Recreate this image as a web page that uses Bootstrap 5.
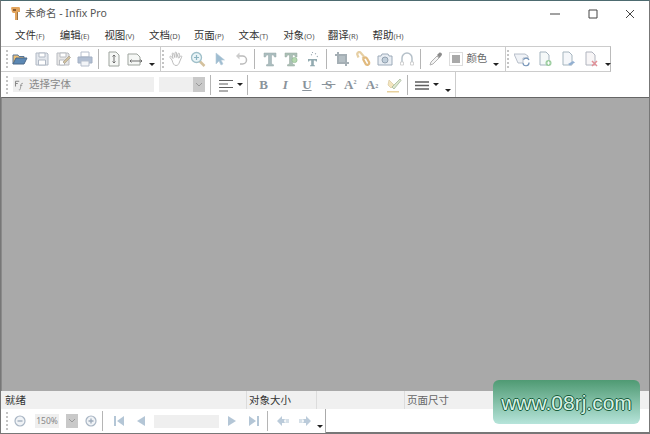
<!DOCTYPE html>
<html lang="zh-CN">
  <head>
    <meta charset="UTF-8" />
    <meta name="viewport" content="width=device-width, initial-scale=1.0" />
    <link rel="stylesheet" href="https://cdn.jsdelivr.net/npm/bootstrap@5.3.3/dist/css/bootstrap.min.css" />
    <title>未命名 - Infix Pro</title>
    <style>
      html, body { width: 650px; height: 434px; overflow: hidden; background: #fff; }
      body { font-family: "Noto Sans", "Noto Sans CJK SC", sans-serif; color: #444; }
      .app-window { position: relative; width: 650px; height: 434px; border: 1px solid #777; border-top: 1px solid #4d6b70; border-bottom: 2px solid #777; }
      .title-bar { height: 25px; padding-left: 9px; font-size: 10.5px; color: #555; }
      .title-bar .app-logo { width: 11px; height: 15px; margin-right: 4px; }
      .win-btn { width: 37.5px; justify-content: center; }
      .menu-bar { height: 20px; padding-left: 14px; font-size: 10.5px; color: #333; }
      .menu-item { width: 44.7px; white-space: nowrap; }
      .menu-item span { font-size: 7.5px; color: #555; }
      .tool-one { border-top: 1px solid #ccc; border-bottom: 1px solid #ccc; height: 26px; width: 610px; border-right: 1px solid #bbb; }
      .tool-two { height: 25px; width: 455px; border-right: 1px solid #ccc; }
      .tool-one, .tool-two, .pager-row { padding-left: 5px; }
      .grip { width: 2px; height: 18px; border-left: 2px dotted #c4c4c4; margin-right: 1px; flex: none; }
      .tool { width: 21.7px; height: 20px; display: flex; align-items: center; justify-content: center; flex: none; }
      .tool svg { width: 16px; height: 16px; opacity: .85; }
      .tool-sep { width: 1px; height: 20px; background: #b5b5b5; margin: 0 4px 0 2px; flex: none; }
      .drop-tick { width: 0; height: 0; border-left: 3px solid transparent; border-right: 3px solid transparent; border-top: 3px solid #222; flex: none; }
      .drop-low { width: 8px; align-self: flex-end; margin: 0 0 5px 2px; flex: none; display: flex; justify-content: center; }
      .group-end { width: 1px; height: 100%; background: #ccc; margin: 0 1px 0 4px; flex: none; }
      .color-end { margin-left: 5px; }
      .swatch-box { width: 14px; height: 14px; border: 1px solid #ddd; margin-left: 3px; display: flex; align-items: center; justify-content: center; flex: none; }
      .swatch-box i { display: block; width: 8px; height: 8px; background: #a9a9a9; }
      .swatch-text { font-size: 10.5px; color: #666; margin-left: 3px; width: 24px; flex: none; white-space: nowrap; }
      .doc-tools .tool { width: 23px; }
      .font-input { width: 141px; height: 15px; background: #efefef; font-size: 10.5px; color: #888; display: flex; align-items: center; flex: none; padding-left: 1px; margin-left: 4px; }
      .font-input svg { width: 12px; height: 12px; margin-right: 3px; }
      .size-combo { width: 46px; height: 15px; background: #efefef; margin-left: 5px; display: flex; justify-content: flex-end; flex: none; }
      .combo-arrow { width: 12px; height: 100%; background: #c9c9c9; display: flex; align-items: center; justify-content: center; flex: none; }
      .combo-sep { margin-left: 5px; }
      .fmt-sep { margin-right: 5px; margin-left: 4px; }
      .fmt-btn { font: 700 13px "Liberation Serif", serif; color: #8a939b; }
      .fmt-btn sup, .fmt-btn sub { font-size: 6px; }
      .fmt-italic { font-style: italic; }
      .fmt-under { text-decoration: underline; }
      .fmt-strike { text-decoration: line-through; }
      .last-drop { margin-left: 5px; }
      .canvas-area { height: 294px; background: #a9a9a9; border-top: 1px solid #666; border-left: 1px solid #8a8a8a; }
      .status-row { height: 18px; background: #f0f0f0; font-size: 10.5px; color: #333; line-height: 18px; }
      .status-cell { padding-left: 4px; border-right: 1px solid #dcdcdc; height: 100%; flex: none; white-space: nowrap; }
      .cell-ready { width: 246px; }
      .cell-object { width: 70px; padding-left: 2px; }
      .cell-blank { width: 88px; }
      .cell-page { padding-left: 2px; color: #666; border: 0; }
      .pager-row { height: 24px; width: 325px; border-right: 1px solid #aaa; background: #fff; }
      .pager-row .tool { width: 22px; }
      .pager-row .drop-low { margin-left: 0; }
      .zoom-val { width: 24px; height: 14px; background: #efefef; color: #888; font-size: 8.5px; line-height: 14px; text-align: center; flex: none; margin-left: 4px; }
      .zoom-arrow { width: 12px; height: 14px; background: #c9c9c9; margin: 0 2px 0 7px; display: flex; align-items: center; justify-content: center; flex: none; }
      .pager-sep { margin: 0 5px 0 0; }
      .page-box { width: 65px; height: 13px; background: #efefef; flex: none; margin: 0 2px 0 2px; }
      .stamp { position: absolute; left: 492px; top: 379px; width: 147px; height: 44px; border-radius: 6px; background: linear-gradient(#4f9a73, #b6e4da); font-family: "Liberation Sans", sans-serif; font-size: 21px; color: #d9f2e6; text-align: center; line-height: 46px; white-space: nowrap; text-shadow: 1px 0 #175c3c, -1px 0 #175c3c, 0 1px #175c3c, 0 -1px #175c3c; }
    </style>
  </head>
  <body>
    <svg width="0" height="0" class="position-absolute">
      <symbol id="i-open" viewBox="0 0 16 16"><path d="M1 13V4h5l1 1.500h5V8" fill="#e9b45c" stroke="#3c5f86"/><path d="M1 13l3-6h11l-3 6z" fill="#3f74a8" stroke="#2d4f75"/></symbol>
      <symbol id="i-save" viewBox="0 0 16 16"><path d="M2 2h11l1 1v11H2z" fill="#dfe3ea" stroke="#a4adbb"/><path d="M5 2h6v4H5zM4.500 9h7v5h-7z" fill="#fff" stroke="#a4adbb"/></symbol>
      <symbol id="i-saveas" viewBox="0 0 16 16"><path d="M2 2h11l1 1v11H2z" fill="#e2e2e2" stroke="#aeb2b8"/><path d="M5 2h6v4H5zM4.500 9h5v5h-5z" fill="#fff" stroke="#aeb2b8"/><path d="M8 11l6-6 1.500 1.500-6 6z" fill="#c9b78e" stroke="#99917f" stroke-width=".7"/></symbol>
      <symbol id="i-print" viewBox="0 0 16 16"><path d="M4 1h8v5H4z" fill="#fff" stroke="#aab4c4"/><path d="M1 6h14v6H1z" fill="#a5b5cc" stroke="#93a2b8"/><path d="M4 10h8v5H4z" fill="#f2f4f7" stroke="#aab4c4"/></symbol>
      <symbol id="i-pageh" viewBox="0 0 16 16"><path d="M3 1h7l3 3v11H3z" fill="#f4f6f4" stroke="#8d958d"/><path d="M8 4v8M6.500 5.500L8 4l1.500 1.500M6.500 10.500L8 12l1.500-1.500" fill="none" stroke="#555"/></symbol>
      <symbol id="i-pagew" viewBox="0 0 16 16"><path d="M1 3h9l3 3v8H1z" fill="#f4f6f4" stroke="#8d958d"/><path d="M3 10h12M4.500 8.500L3 10l1.500 1.500M13.500 8.500L15 10l-1.500 1.500" fill="none" stroke="#555"/></symbol>
      <symbol id="i-hand" viewBox="0 0 16 16"><path d="M4 9L2 6.500c-.7-1 .6-1.800 1.300-1L5 7.500 4.200 3c-.2-1.200 1.300-1.400 1.500-.3L6.800 6.500 7 2c0-1.200 1.500-1.200 1.500 0l.3 4.500L10 2.800c.3-1 1.700-.7 1.500.4l-.8 4 1.600-2c.8-.9 1.900 0 1.300 1L11.500 11c-.7 2-1.500 3.500-3.500 3.500-2.200 0-3-2-4-5.500z" fill="#fff" stroke="#aaa" stroke-width=".9"/></symbol>
      <symbol id="i-zoom" viewBox="0 0 16 16"><path d="M9.500 10l5 5" stroke="#cdb78c" stroke-width="2.500"/><circle cx="6.500" cy="6.500" r="5" fill="#e6f3f6" stroke="#8fb5c0" stroke-width="1.300"/><path d="M4 6.500h5M6.500 4v5" stroke="#7aa9b8" stroke-width="1.200"/></symbol>
      <symbol id="i-arrow" viewBox="0 0 16 16"><path d="M5 2v11l3-3 2 4 2-1-2-4h3.500z" fill="#8fb2c9" stroke="#a9c3d4" stroke-width=".6"/></symbol>
      <symbol id="i-undo" viewBox="0 0 16 16"><path d="M5 5h4.500a4 4 0 0 1 0 8H7" fill="none" stroke="#b0b0b0" stroke-width="1.500"/><path d="M6.500 1.500L3 5l3.500 3.500z" fill="#c4c4c4"/></symbol>
      <symbol id="i-text" viewBox="0 0 16 16"><path d="M2 2h12v4h-1.500l-1-2H9.500v9l2 .7V15h-7v-1.300l2-.7V4H4.500l-1 2H2z" fill="#9db2b4" stroke="#84999b" stroke-width=".5"/></symbol>
      <symbol id="i-text2" viewBox="0 0 16 16"><path d="M2 2h12v4h-1.500l-1-2H9.500v9l2 .7V15h-7v-1.300l2-.7V4H4.500l-1 2H2z" fill="#9db5aa" stroke="#84998f" stroke-width=".5"/><circle cx="11.500" cy="9" r="2.600" fill="#a9d2a2" stroke="#7bae7e" stroke-width=".7"/></symbol>
      <symbol id="i-text3" viewBox="0 0 16 16"><path d="M3 8h9v2.500h-1L10.300 9.500H8.800V14l1.200.5v.8H5v-.8l1.200-.5V9.500H4.700L4 10.500H3z" fill="#7f9ca3"/><path d="M7 1.500h1M10 2.500l1 .5M12 5l.6 1M6 4l1-.5" stroke="#8a9aa5" stroke-width="1.100" fill="none"/></symbol>
      <symbol id="i-crop" viewBox="0 0 16 16"><path d="M4 1v11h11M1 4h11v11" fill="none" stroke="#96a2a9" stroke-width="2"/><path d="M5 5h6v6H5z" fill="#a9b4ba"/></symbol>
      <symbol id="i-link" viewBox="0 0 16 16"><path d="M3.500 6.500L2.500 4a2 2 0 0 1 3-2.500L8.500 5a2 2 0 0 1-1.500 2.500" fill="none" stroke="#e2c795" stroke-width="2.200"/><path d="M8 8l3 5.500a2 2 0 0 0 3.200-2L12 7.500a2 2 0 0 0-3.500 0" fill="none" stroke="#dcae68" stroke-width="2.200"/></symbol>
      <symbol id="i-camera" viewBox="0 0 16 16"><path d="M1 5h3l1-2h6l1 2h3v9H1z" fill="#e4ebf1" stroke="#8c9cad"/><circle cx="8" cy="9" r="3" fill="#b6c6d4" stroke="#7f91a3"/></symbol>
      <symbol id="i-curve" viewBox="0 0 16 16"><path d="M3 13V7a5 5 0 0 1 10 0v6" fill="none" stroke="#a9b6c0" stroke-width="1.500"/><path d="M1.500 11h3v3h-3zM11.500 11h3v3h-3z" fill="#fff" stroke="#c0c0c0" stroke-width=".8"/></symbol>
      <symbol id="i-dropper" viewBox="0 0 16 16"><path d="M2 14l1-3 6-6 2 2-6 6z" fill="#f3f3f3" stroke="#a5a5a5"/><path d="M9 4l2-2c1.500-1.500 4 1 2.500 2.500L11.500 7z" fill="#777"/></symbol>
      <symbol id="i-sync" viewBox="0 0 16 16"><path d="M0 3h11l3 2v2H9v5H4z" fill="#eef1f6" stroke="#98a3b2" stroke-width=".8"/><path d="M9 12a3 3 0 0 0 6-.5M15 9a3 3 0 0 0-5.500-.2" fill="none" stroke="#5f83ad" stroke-width="1.200"/></symbol>
      <symbol id="i-docadd" viewBox="0 0 16 16"><path d="M3 1h6l3 3v10H3z" fill="#f4f8f8" stroke="#96a8b4"/><circle cx="11.500" cy="12" r="3" fill="#8ac58e"/><path d="M9.800 12h3.400M11.500 10.300v3.400" stroke="#fff"/></symbol>
      <symbol id="i-docedit" viewBox="0 0 16 16"><path d="M3 1h6l3 3v10H3z" fill="#f4f6fa" stroke="#96a8b4"/><path d="M8 13l5-3 2 1.500-5 3z" fill="#7fa2c9"/></symbol>
      <symbol id="i-docdel" viewBox="0 0 16 16"><path d="M3 1h6l3 3v10H3z" fill="#f7f5f6" stroke="#a4a8b4"/><path d="M9 10l5 5M14 10l-5 5" stroke="#dc7d86" stroke-width="1.500"/></symbol>
      <symbol id="i-ff" viewBox="0 0 16 16"><path d="M2 3h5M2 3v7M2 6h3" stroke="#888" fill="none" stroke-width="1.400"/><path d="M12 6c-2-.8-2.500.5-2.700 2l-.8 5c-.2 1.300-1 1.800-2 1.300M8 8.500h3" stroke="#999" fill="none" stroke-width="1.200"/></symbol>
      <symbol id="i-align" viewBox="0 0 16 16"><path d="M1 3.500h14M1 7h9M1 10.500h14M1 14h9" stroke="#444" stroke-width="1.200"/></symbol>
      <symbol id="i-lines" viewBox="0 0 16 16"><path d="M1 5h14M1 8.500h14M1 12h14" stroke="#444" stroke-width="1.300"/></symbol>
      <symbol id="i-mark" viewBox="0 0 16 16"><path d="M1 14h12v1.500H1z" fill="#e4c98c"/><path d="M3 3l5 5-3 3-3-3z" fill="#f1e1b6" stroke="#cfb77f" stroke-width=".6"/><path d="M6 10L14 2l1 1.500L8 12z" fill="#d9e4c8" stroke="#8ba37f" stroke-width=".7"/></symbol>
      <symbol id="i-minus" viewBox="0 0 16 16"><circle cx="8" cy="8" r="5" fill="#eef1f5" stroke="#9aa9ba" stroke-width="1.200"/><path d="M5.500 8h5" stroke="#8c9cae" stroke-width="1.300"/></symbol>
      <symbol id="i-plus" viewBox="0 0 16 16"><circle cx="8" cy="8" r="5" fill="#eef1f5" stroke="#9aa9ba" stroke-width="1.200"/><path d="M5.500 8h5M8 5.500v5" stroke="#8c9cae" stroke-width="1.300"/></symbol>
      <symbol id="i-first" viewBox="0 0 16 16"><path d="M3 3h2v10H3zM13 3v10L6 8z" fill="#a8bdd0"/></symbol>
      <symbol id="i-prev" viewBox="0 0 16 16"><path d="M12 3v10L4 8z" fill="#a8bdd0"/></symbol>
      <symbol id="i-next" viewBox="0 0 16 16"><path d="M4 3v10l8-5z" fill="#a8bdd0"/></symbol>
      <symbol id="i-last" viewBox="0 0 16 16"><path d="M11 3h2v10h-2zM3 3v10l7-5z" fill="#a8bdd0"/></symbol>
      <symbol id="i-back" viewBox="0 0 16 16"><path d="M2 8l5-5v3h3l-1 2 1 2H7v3z" fill="#b0c3d4"/><path d="M10 6h4v4h-4l1-2z" fill="#cfdbe5"/></symbol>
      <symbol id="i-fwd" viewBox="0 0 16 16"><path d="M14 8L9 3v3H6l1 2-1 2h3v3z" fill="#b0c3d4"/><path d="M6 6H2v4h4L5 8z" fill="#cfdbe5"/></symbol>
    </svg>

    <div class="app-window">
      <div class="title-bar d-flex align-items-center">
        <svg class="app-logo" viewBox="0 0 11 15"><path d="M1 2c0-1 1-1 2-1h6c1 0 1 1 1 2v3H8v8H5V7H3L2 6z" fill="#e2a45c"/><path d="M3 3h3v2H3z" fill="#8a5a2e"/><path d="M7 6h1v8H7z" fill="#9a7448"/></svg>
        <span>未命名 - Infix Pro</span>
        <div class="ms-auto d-flex align-items-center">
          <div class="win-btn d-flex"><svg width="10" height="10" viewBox="0 0 10 10"><path d="M0 5h10" stroke="#444"/></svg></div>
          <div class="win-btn d-flex"><svg width="10" height="10" viewBox="0 0 10 10"><path d="M1 1h8v8H1z" fill="none" stroke="#444"/></svg></div>
          <div class="win-btn d-flex"><svg width="10" height="10" viewBox="0 0 10 10"><path d="M1 1l8 8M9 1l-8 8" stroke="#444"/></svg></div>
        </div>
      </div>

      <div class="menu-bar d-flex align-items-center">
        <div class="menu-item">文件<span>(F)</span></div>
        <div class="menu-item">编辑<span>(E)</span></div>
        <div class="menu-item">视图<span>(V)</span></div>
        <div class="menu-item">文档<span>(D)</span></div>
        <div class="menu-item">页面<span>(P)</span></div>
        <div class="menu-item">文本<span>(T)</span></div>
        <div class="menu-item">对象<span>(O)</span></div>
        <div class="menu-item">翻译<span>(R)</span></div>
        <div class="menu-item">帮助<span>(H)</span></div>
      </div>

      <!-- main toolbar -->
      <div class="tool-one d-flex align-items-center">
        <div class="grip"></div>
        <div class="tool"><svg><use href="#i-open"/></svg></div>
        <div class="tool"><svg><use href="#i-save"/></svg></div>
        <div class="tool"><svg><use href="#i-saveas"/></svg></div>
        <div class="tool"><svg><use href="#i-print"/></svg></div>
        <div class="tool-sep"></div>
        <div class="tool"><svg><use href="#i-pageh"/></svg></div>
        <div class="tool"><svg><use href="#i-pagew"/></svg></div>
        <div class="drop-low"><div class="drop-tick"></div></div>
        <div class="group-end"></div>
        <div class="grip"></div>
        <div class="tool"><svg><use href="#i-hand"/></svg></div>
        <div class="tool"><svg><use href="#i-zoom"/></svg></div>
        <div class="tool"><svg><use href="#i-arrow"/></svg></div>
        <div class="tool"><svg><use href="#i-undo"/></svg></div>
        <div class="tool-sep"></div>
        <div class="tool"><svg><use href="#i-text"/></svg></div>
        <div class="tool"><svg><use href="#i-text2"/></svg></div>
        <div class="tool"><svg><use href="#i-text3"/></svg></div>
        <div class="tool-sep"></div>
        <div class="tool"><svg><use href="#i-crop"/></svg></div>
        <div class="tool"><svg><use href="#i-link"/></svg></div>
        <div class="tool"><svg><use href="#i-camera"/></svg></div>
        <div class="tool"><svg><use href="#i-curve"/></svg></div>
        <div class="tool-sep"></div>
        <div class="tool"><svg><use href="#i-dropper"/></svg></div>
        <div class="swatch-box"><i></i></div>
        <div class="swatch-text">颜色</div>
        <div class="drop-low"><div class="drop-tick"></div></div>
        <div class="group-end color-end"></div>
        <div class="grip"></div>
        <div class="doc-tools d-flex align-items-center">
          <div class="tool"><svg><use href="#i-sync"/></svg></div>
          <div class="tool"><svg><use href="#i-docadd"/></svg></div>
          <div class="tool"><svg><use href="#i-docedit"/></svg></div>
          <div class="tool"><svg><use href="#i-docdel"/></svg></div>
        </div>
        <div class="drop-low"><div class="drop-tick"></div></div>
      </div>

      <!-- text toolbar -->
      <div class="tool-two d-flex align-items-center">
        <div class="grip"></div>
        <div class="font-input"><svg><use href="#i-ff"/></svg>选择字体</div>
        <div class="size-combo"><div class="combo-arrow"><svg width="8" height="6" viewBox="0 0 8 6"><path d="M1 1l3 3 3-3" fill="none" stroke="#999"/></svg></div></div>
        <div class="tool-sep combo-sep"></div>
        <div class="tool"><svg><use href="#i-align"/></svg></div>
        <div class="drop-tick"></div>
        <div class="tool-sep fmt-sep"></div>
        <div class="tool fmt-btn">B</div>
        <div class="tool fmt-btn fmt-italic">I</div>
        <div class="tool fmt-btn"><span class="fmt-under">U</span></div>
        <div class="tool fmt-btn"><span class="fmt-strike">&nbsp;S&nbsp;</span></div>
        <div class="tool fmt-btn">A<sup>2</sup></div>
        <div class="tool fmt-btn">A<sub>2</sub></div>
        <div class="tool"><svg><use href="#i-mark"/></svg></div>
        <div class="tool-sep"></div>
        <div class="tool"><svg><use href="#i-lines"/></svg></div>
        <div class="drop-tick"></div>
        <div class="drop-low last-drop"><div class="drop-tick"></div></div>
      </div>

      <div class="canvas-area"></div>

      <div class="status-row d-flex">
        <div class="status-cell cell-ready">就绪</div>
        <div class="status-cell cell-object">对象大小</div>
        <div class="status-cell cell-blank"></div>
        <div class="status-cell cell-page">页面尺寸</div>
      </div>

      <div class="pager-row d-flex align-items-center">
        <div class="grip"></div>
        <div class="tool"><svg><use href="#i-minus"/></svg></div>
        <div class="zoom-val">150%</div>
        <div class="zoom-arrow"><svg width="8" height="6" viewBox="0 0 8 6"><path d="M1 1l3 3 3-3" fill="none" stroke="#999"/></svg></div>
        <div class="tool"><svg><use href="#i-plus"/></svg></div>
        <div class="tool-sep pager-sep"></div>
        <div class="tool"><svg><use href="#i-first"/></svg></div>
        <div class="tool"><svg><use href="#i-prev"/></svg></div>
        <div class="page-box"></div>
        <div class="tool"><svg><use href="#i-next"/></svg></div>
        <div class="tool"><svg><use href="#i-last"/></svg></div>
        <div class="tool-sep"></div>
        <div class="tool"><svg><use href="#i-back"/></svg></div>
        <div class="tool"><svg><use href="#i-fwd"/></svg></div>
        <div class="drop-low"><div class="drop-tick"></div></div>
      </div>

      <div class="stamp">www.08rj.com</div>
    </div>
    <script src="https://cdn.jsdelivr.net/npm/bootstrap@5.3.3/dist/js/bootstrap.bundle.min.js"></script>
  </body>
</html>
